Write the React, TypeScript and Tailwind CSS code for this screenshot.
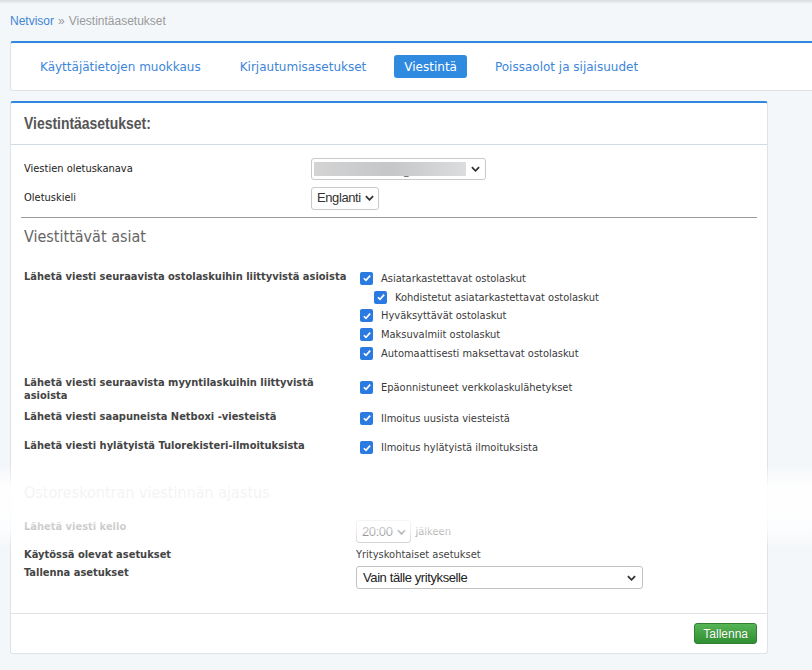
import React from "react";

const TAHOMA = "font-['DejaVu_Sans_Condensed','DejaVu_Sans',sans-serif]";

function Check() {
  return (
    <span className="inline-flex h-[13px] w-[13px] shrink-0 items-center justify-center rounded-[2px] bg-[#2a7ae2]">
      <svg viewBox="0 0 12 12" className="h-[10px] w-[10px]">
        <path d="M2.2 6.3 L4.8 8.8 L9.8 3.2" fill="none" stroke="#fff" strokeWidth="2" />
      </svg>
    </span>
  );
}

function CheckItem({ label, indent }: { label: string; indent?: boolean }) {
  return (
    <div className={`flex h-[18.75px] items-center gap-[8px] ${indent ? "pl-[18px]" : "pl-[4px]"}`}>
      <Check />
      <span className="text-[11px] text-[#3a3a3a]">{label}</span>
    </div>
  );
}

function Chevron({ className = "" }: { className?: string }) {
  return (
    <svg viewBox="0 0 10 6" className={`h-[6px] w-[9px] ${className}`}>
      <path d="M1 1 L5 5 L9 1" fill="none" stroke="currentColor" strokeWidth="2" />
    </svg>
  );
}

function Row({
  label,
  children,
  className = "",
  valueClass = "",
}: {
  label: React.ReactNode;
  children: React.ReactNode;
  className?: string;
  valueClass?: string;
}) {
  return (
    <div className={`flex items-start text-[11px] leading-[13px] ${className}`}>
      <div className="w-[332px] font-bold text-[#444]">{label}</div>
      <div className={`flex-1 ${valueClass}`}>{children}</div>
    </div>
  );
}

const checkRows: {
  label: string;
  items: { t: string; indent?: boolean }[];
  mt: string;
  pt: string;
}[] = [
  {
    label: "Lähetä viesti seuraavista ostolaskuihin liittyvistä asioista",
    items: [
      { t: "Asiatarkastettavat ostolaskut" },
      { t: "Kohdistetut asiatarkastettavat ostolaskut", indent: true },
      { t: "Hyväksyttävät ostolaskut" },
      { t: "Maksuvalmiit ostolaskut" },
      { t: "Automaattisesti maksettavat ostolaskut" },
    ],
    mt: "mt-[24px]",
    pt: "-mt-[1px]",
  },
  {
    label: "Lähetä viesti seuraavista myyntilaskuihin liittyvistä asioista",
    items: [{ t: "Epäonnistuneet verkkolaskulähetykset" }],
    mt: "mt-[13px]",
    pt: "pt-[2px]",
  },
  {
    label: "Lähetä viesti saapuneista Netboxi -viesteistä",
    items: [{ t: "Ilmoitus uusista viesteistä" }],
    mt: "mt-[8px]",
    pt: "-mt-[1px]",
  },
  {
    label: "Lähetä viesti hylätyistä Tulorekisteri-ilmoituksista",
    items: [{ t: "Ilmoitus hylätyistä ilmoituksista" }],
    mt: "mt-[11px]",
    pt: "",
  },
];

const SELECT_FONT = "font-['Liberation_Sans',Arial,sans-serif] text-[13px] tracking-[-0.4px]";

export default function App() {
  return (
    <div className={`relative min-h-[670px] w-full overflow-hidden bg-[#f4f7fa] ${TAHOMA}`}>
      <div className="h-[4px] bg-gradient-to-b from-[#d9dcdf] to-transparent" />

      {/* breadcrumb */}
      <div className="flex h-[30px] items-center gap-[4px] pl-[10px] pt-[3px] font-['Liberation_Sans',Arial,sans-serif] text-[12px]">
        <span className="text-[#3d85d6]">Netvisor</span>
        <span className="text-[#9a9a9a]">»</span>
        <span className="text-[#9a9a9a]">Viestintäasetukset</span>
      </div>

      {/* tabs */}
      <div className="ml-[10px] mt-[7px] w-[900px] rounded-[3px] border border-t-2 border-[#dfe3e8] border-t-[#3088de] bg-white">
        <div className="flex h-[47px] items-center pl-[29px] font-['DejaVu_Sans',sans-serif] text-[12px] text-[#3d86d9]">
          <span>Käyttäjätietojen muokkaus</span>
          <span className="ml-[39px]">Kirjautumisasetukset</span>
          <span className="ml-[28px] flex h-[23px] items-center rounded-[3px] bg-[#2f8ae0] px-[10px] text-white">
            Viestintä
          </span>
          <span className="ml-[28px]">Poissaolot ja sijaisuudet</span>
        </div>
      </div>

      {/* main card */}
      <div className="ml-[10px] mt-[10px] w-[758px] rounded-[3px] border border-t-2 border-[#dfe3e8] border-t-[#3088de] bg-white">
        <div className="flex h-[42px] items-center border-b border-[#cfdbe6] px-[13px]">
          <h1 className="origin-left scale-x-[0.82] font-['Liberation_Sans',Arial,sans-serif] text-[17px] font-bold text-[#555]">
            Viestintäasetukset:
          </h1>
        </div>

        <div className="px-[13px] pt-[13px]">
          <div className="flex h-[22px] items-center">
            <span className="w-[287px] text-[11px] text-[#222]">Viestien oletuskanava</span>
            <div className="flex h-[22px] w-[175px] items-center rounded-[3px] border border-[#c9c9c9] bg-white pl-[2px] pr-[5px]">
              <div className="relative h-[14px] flex-1 bg-[linear-gradient(to_right,#d4d4d4,#c4c6c8_50%,#dcdddf)]">
                <span className="absolute left-[90px] top-[4px] text-[10px] leading-[10px] text-[#555]">_</span>
              </div>
              <Chevron className="ml-[5px] text-[#333]" />
            </div>
          </div>
          <div className="mt-[7px] flex h-[22px] items-center">
            <span className="w-[287px] text-[11px] text-[#222]">Oletuskieli</span>
            <div className={`flex h-[23px] items-center gap-[4px] rounded-[3px] border border-[#c9c9c9] bg-white pl-[5px] pr-[4px] text-[#333] ${SELECT_FONT}`}>
              Englanti
              <Chevron className="text-[#333]" />
            </div>
          </div>
        </div>

        <div className="mx-[10px] mt-[8px] h-px bg-[#9a9a9a]" />

        <div className="px-[13px]">
          <h2 className="mt-[10px] text-[16px] leading-[18px] text-[#666]">Viestittävät asiat</h2>

          {checkRows.map((r) => (
            <Row key={r.label} label={r.label} className={r.mt} valueClass={r.pt}>
              {r.items.map((it) => (
                <CheckItem key={it.t} label={it.t} indent={it.indent} />
              ))}
            </Row>
          ))}

          <h2 className="mt-[27px] text-[16px] leading-[18px] text-[#666]">
            Ostoreskontran viestinnän ajastus
          </h2>

          <Row label="Lähetä viesti kello" className="mt-[18px]">
            <div className="flex items-center gap-[5px]">
              <div className={`flex h-[23px] items-center gap-[4px] rounded-[3px] border border-[#c9c9c9] bg-white pl-[5px] pr-[4px] text-[#333] ${SELECT_FONT}`}>
                20:00
                <Chevron className="text-[#555]" />
              </div>
              <span className="text-[#555]">jälkeen</span>
            </div>
          </Row>

          <Row label="Käytössä olevat asetukset" className="mt-[5px]">
            <span className="text-[#444]">Yrityskohtaiset asetukset</span>
          </Row>

          <Row label="Tallenna asetukset" className="mt-[5px]">
            <div className="flex h-[23px] w-[287px] items-center justify-between rounded-[3px] border border-[#c2c2c2] bg-white pl-[6px] pr-[6px] font-['Liberation_Sans',Arial,sans-serif] text-[13px] tracking-[-0.4px] text-[#222]">
              Vain tälle yritykselle
              <Chevron className="text-[#333]" />
            </div>
          </Row>
        </div>

        <div className="mt-[24px] flex justify-end border-t border-[#dfe3e8] px-[10px] py-[9px]">
          <button className="h-[21px] rounded-[3px] border border-[#2f8030] bg-gradient-to-b from-[#55b555] to-[#2f8f32] px-[8px] font-['Liberation_Sans',Arial,sans-serif] text-[12px] leading-none text-white [text-shadow:0_0_1px_rgba(0,0,0,0.3)]">
            Tallenna
          </button>
        </div>
      </div>

      {/* fading band over the scheduling section */}
      <div className="pointer-events-none absolute left-0 right-0 top-[466px] h-[82px] bg-[linear-gradient(to_bottom,rgba(255,255,255,0)_0%,rgba(255,255,255,0.93)_25%,rgba(255,255,255,0.9)_55%,rgba(255,255,255,0.7)_78%,rgba(255,255,255,0)_100%)]" />
    </div>
  );
}
